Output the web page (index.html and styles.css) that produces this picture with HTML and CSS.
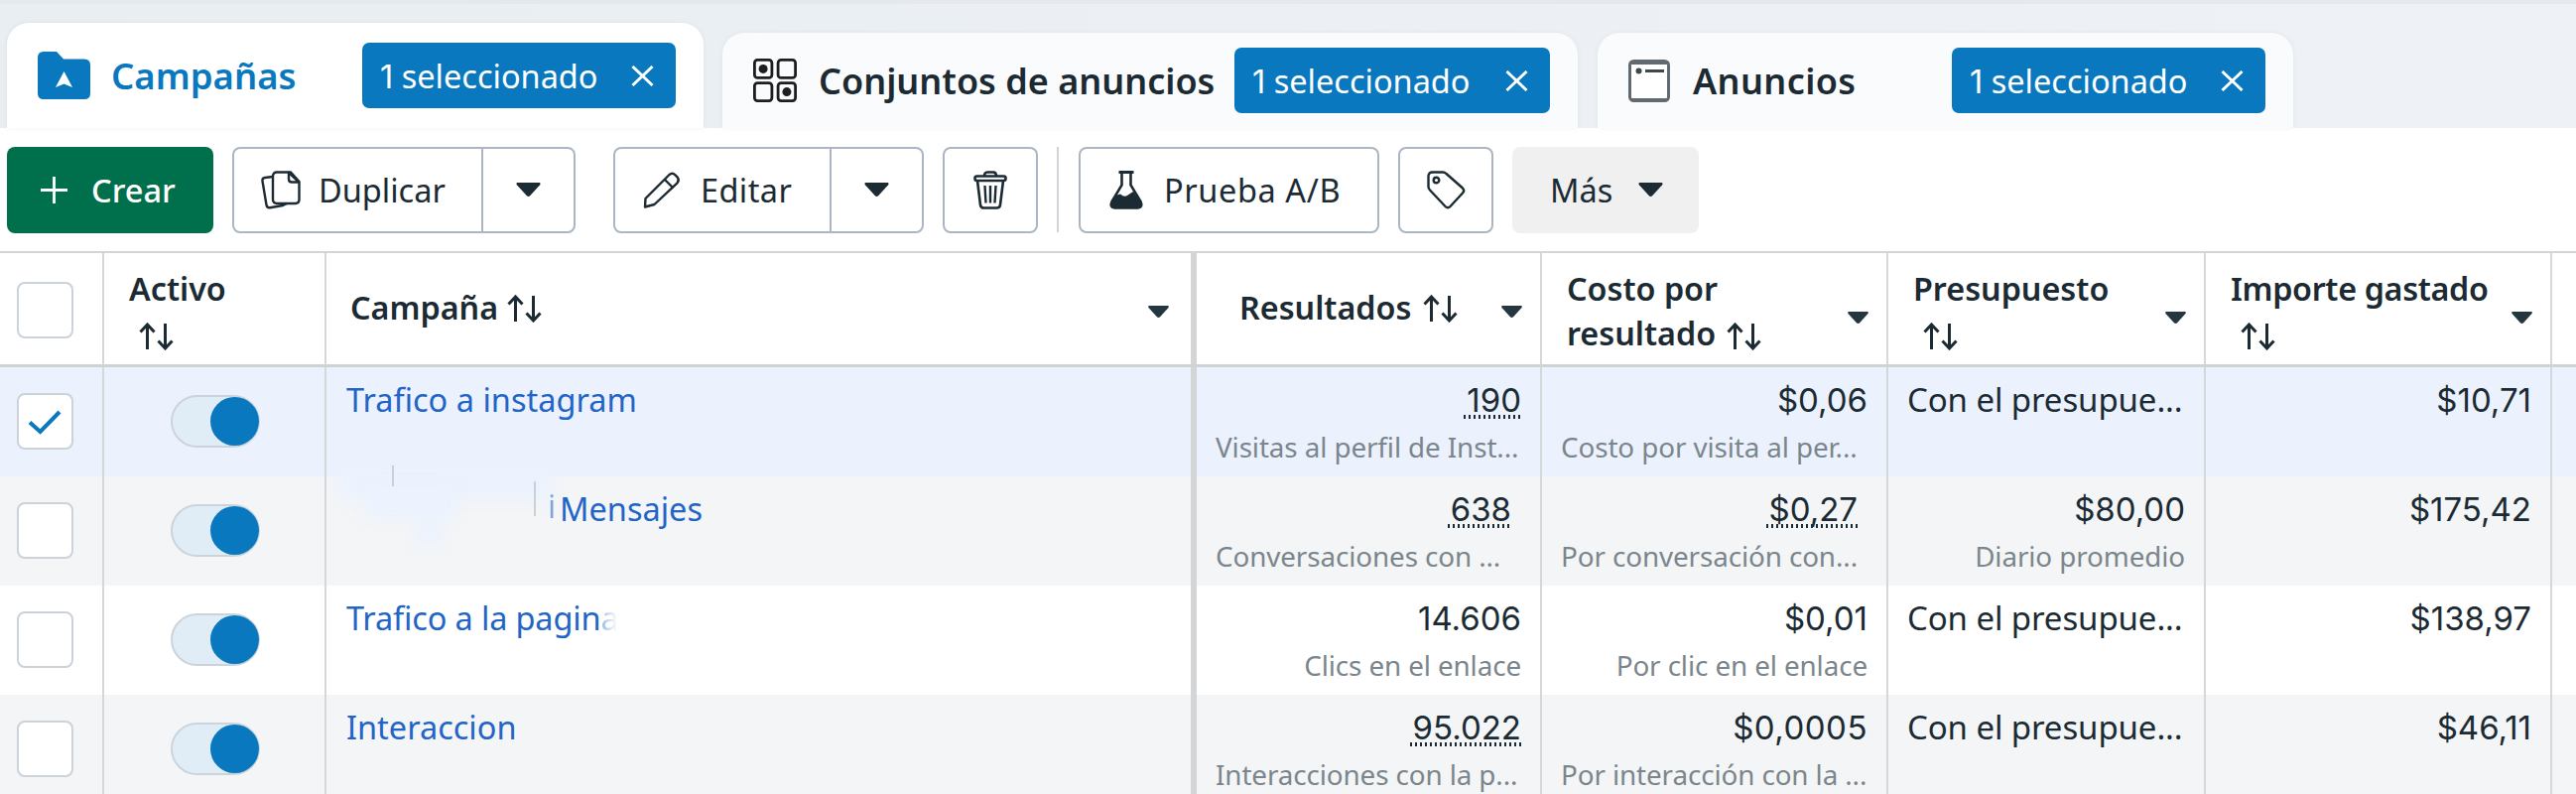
FILE: index.html
```html
<!DOCTYPE html>
<html lang="es">
<head>
<meta charset="utf-8">
<title>Campañas</title>
<link rel="stylesheet" href="styles.css">
</head>
<body>
<svg class="defs" width="0" height="0">
  <symbol id="sort" viewBox="0 0 35 28"><path d="M8.500 27V2M1.500 9.500L8.500 2l7 7.500M26.500 1v25M19.500 18.500l7 7.500 7-7.500" fill="none" stroke="currentColor" stroke-width="3"/></symbol>
  <symbol id="caret" viewBox="0 0 26 15"><path d="M1.500 0h23c1.500 0 1.700 1.500 1 2.500L15 14c-1.300 1.300-2.700 1.300-4 0L.5 2.500C-.2 1.500 0 0 1.500 0z" fill="currentColor"/></symbol>
  <symbol id="close" viewBox="0 0 24 22"><path d="M1.500 1l21 20M22.500 1l-21 20" fill="none" stroke="currentColor" stroke-width="3"/></symbol>
</svg>

<nav class="tabs">
  <div class="tab tab-active">
    <svg class="ic-folder" viewBox="0 0 53 48"><path d="M6 0h13l7 7.500h21q6 0 6 6V42q0 6-6 6H6q-6 0-6-6V6q0-6 6-6z" fill="#0a78be"/><path d="M26.500 20L35 36l-8.500-3.500L18 36z" fill="#fff"/></svg>
    <span class="tab-name">Campañas</span>
    <span class="pill"><span><span class="num">1</span> seleccionado</span><svg class="ic-close"><use href="#close"/></svg></span>
  </div>
  <div class="tab tab-sets">
    <svg class="ic-grid" viewBox="0 0 44 44" fill="none" stroke="#1c1e21" stroke-width="2.800"><rect x="1.400" y="1.400" width="17.500" height="18" rx="3"/><rect x="25.100" y="1.400" width="17.500" height="18" rx="3"/><rect x="1.400" y="24.600" width="17.500" height="18" rx="3"/><rect x="25.100" y="24.600" width="17.500" height="18" rx="3"/><circle cx="10.100" cy="10.400" r="4.500" fill="#1c1e21" stroke="none"/><circle cx="33.900" cy="33.600" r="4.500" fill="#1c1e21" stroke="none"/></svg>
    <span class="tab-name">Conjuntos de anuncios</span>
    <span class="pill"><span><span class="num">1</span> seleccionado</span><svg class="ic-close"><use href="#close"/></svg></span>
  </div>
  <div class="tab tab-ads">
    <svg class="ic-ad" viewBox="0 0 42 43"><rect x="1.500" y="1.500" width="39" height="40" rx="4" fill="#fff" stroke="#606a70" stroke-width="3"/><path d="M2 4h38M2 40h38" stroke="#606a70" stroke-width="2"/><circle cx="10.500" cy="11.500" r="3" fill="#3d474c"/><path d="M17 11.500h19" stroke="#3d474c" stroke-width="3"/></svg>
    <span class="tab-name">Anuncios</span>
    <span class="pill"><span><span class="num">1</span> seleccionado</span><svg class="ic-close"><use href="#close"/></svg></span>
  </div>
</nav>

<div class="toolbar">
  <button class="btn create"><svg class="ic-plus" viewBox="0 0 27 27"><path d="M13.500 0v27M0 13.500h27" stroke="#fff" stroke-width="2.800"/></svg>Crear</button>
  <div class="btn split dup">
    <span class="main"><svg class="ic-copy" viewBox="0 0 40 39" fill="none" stroke="#1c2b33" stroke-width="2.400" stroke-linejoin="round"><path d="M12 6L4 7q-3 .5-2.500 3.500l4 24q.6 3.200 3.500 2.700L22 35l4-2"/><path d="M16 1.500h14l8.500 9.500v18q0 4-4 4H16q-4 0-4-4V5.500q0-4 4-4z" fill="#fff"/><path d="M28 2v6.500q0 3 3 3h7z" fill="#fff"/></svg>Duplicar</span>
    <span class="drop"><svg class="ic-caret"><use href="#caret"/></svg></span>
  </div>
  <div class="btn split edit">
    <span class="main"><svg class="ic-pencil" viewBox="0 0 38 37" fill="none" stroke="#1c2b33" stroke-width="2.400" stroke-linejoin="round"><path d="M2 35.500l.5-8.500L26.500 3q3-2.500 6 .3l2 2q2.500 3 0 6L11.500 33z"/><path d="M22 8l8.500 8.500"/></svg>Editar</span>
    <span class="drop"><svg class="ic-caret"><use href="#caret"/></svg></span>
  </div>
  <div class="btn square trash"><svg class="ic-trash" viewBox="0 0 34 39" fill="none" stroke="#1c2b33" stroke-width="2.600" stroke-linejoin="round"><path d="M11 5.500Q11 1.500 14 1.500h6q3 0 3 4"/><rect x="1.500" y="5.500" width="31" height="4.500" rx="2"/><path d="M4 10l3 24.500q.4 3 3.500 3h13q3.100 0 3.500-3L30 10"/><path d="M11.500 15l1 17.500M17 15v17.500M22.500 15l-1 17.500" stroke-width="2.400"/></svg></div>
  <span class="sep"></span>
  <div class="btn ab"><svg class="ic-flask" viewBox="0 0 34 39"><path d="M12.500 2v12.500L2.500 31q-2.500 6 3 6.500h23q5.500-.5 3-6.500l-10-16.500V2" fill="none" stroke="#1c2b33" stroke-width="2.600"/><path d="M9.500 1.500h15" stroke="#1c2b33" stroke-width="3"/><path d="M6 25l5-1.500q4 3.500 7 1.500l6-4 8 11q2 5-3 5.500H5q-5-.5-3-5.500z" fill="#1c2b33"/></svg>Prueba A/B</div>
  <div class="btn square"><svg class="ic-tag" viewBox="0 0 39 39" fill="none" stroke="#1c2b33" stroke-width="2.400" stroke-linejoin="round"><path d="M1.500 5.500q0-4 4-4H16q2 0 3.500 1.500L36 17.500q2.500 2.500 0 5L23.500 36q-2.500 2.500-5 0L3 19.500Q1.500 18 1.500 16z"/><circle cx="9.500" cy="9.500" r="2.800"/></svg></div>
  <div class="btn more">Más<svg class="ic-caret"><use href="#caret"/></svg></div>
</div>

<div class="table">
  <div class="row head">
    <div class="c"><span class="check"></span></div>
    <div class="c two"><span class="label">Activo<br><svg class="ic-sort ind"><use href="#sort"/></svg></span></div>
    <div class="c one name"><span class="label">Campaña <svg class="ic-sort"><use href="#sort"/></svg></span><svg class="arr"><use href="#caret"/></svg></div>
    <div class="c one res"><span class="label">Resultados <svg class="ic-sort far"><use href="#sort"/></svg></span><svg class="arr"><use href="#caret"/></svg></div>
    <div class="c two"><span class="label">Costo por<br>resultado <svg class="ic-sort far"><use href="#sort"/></svg></span><svg class="arr"><use href="#caret"/></svg></div>
    <div class="c two"><span class="label">Presupuesto<br><svg class="ic-sort ind"><use href="#sort"/></svg></span><svg class="arr"><use href="#caret"/></svg></div>
    <div class="c two amount"><span class="label">Importe gastado<br><svg class="ic-sort ind"><use href="#sort"/></svg></span><svg class="arr"><use href="#caret"/></svg></div>
    <div class="c"></div>
  </div>

  <div class="row selected">
    <div class="c"><span class="check"><svg class="ic-check" viewBox="0 0 34 25"><path d="M2 12.500l10.500 9.500L32 2" fill="none" stroke="#0a78be" stroke-width="4"/></svg></span></div>
    <div class="c"><span class="toggle"></span></div>
    <div class="c link">Trafico a instagram</div>
    <div class="c val"><p><span class="num dot">190</span></p><p class="sub left">Visitas al perfil de Inst...</p></div>
    <div class="c val"><p><span class="num">$0,06</span></p><p class="sub left">Costo por visita al per...</p></div>
    <div class="c val left"><p>Con el presupue...</p></div>
    <div class="c val"><p><span class="num">$10,71</span></p></div>
    <div class="c"></div>
  </div>

  <div class="row alt">
    <div class="c"><span class="check"></span></div>
    <div class="c"><span class="toggle"></span></div>
    <div class="c link smudged"><i class="smear s1"></i><i class="smear s2"></i><i class="smear s3"></i><i class="tick t1"></i><i class="tick t2"></i><span class="ghost">j</span><span>Mensajes</span></div>
    <div class="c val"><p class="in"><span class="num dot">638</span></p><p class="sub left">Conversaciones con ...</p></div>
    <div class="c val"><p class="in"><span class="num dot">$0,27</span></p><p class="sub left">Por conversación con...</p></div>
    <div class="c val"><p><span class="num">$80,00</span></p><p class="sub">Diario promedio</p></div>
    <div class="c val"><p><span class="num">$175,42</span></p></div>
    <div class="c"></div>
  </div>

  <div class="row">
    <div class="c"><span class="check"></span></div>
    <div class="c"><span class="toggle"></span></div>
    <div class="c link page">Trafico a la pagin<span class="fade">a</span></div>
    <div class="c val"><p><span class="num">14.606</span></p><p class="sub">Clics en el enlace</p></div>
    <div class="c val"><p><span class="num">$0,01</span></p><p class="sub">Por clic en el enlace</p></div>
    <div class="c val left"><p>Con el presupue...</p></div>
    <div class="c val"><p><span class="num">$138,97</span></p></div>
    <div class="c"></div>
  </div>

  <div class="row alt">
    <div class="c"><span class="check"></span></div>
    <div class="c"><span class="toggle"></span></div>
    <div class="c link">Interaccion</div>
    <div class="c val"><p><span class="num dot">95.022</span></p><p class="sub left">Interacciones con la p...</p></div>
    <div class="c val"><p><span class="num wide">$0,0005</span></p><p class="sub left">Por interacción con la ...</p></div>
    <div class="c val left"><p>Con el presupue...</p></div>
    <div class="c val"><p><span class="num">$46,11</span></p></div>
    <div class="c"></div>
  </div>
</div>
</body>
</html>
```
FILE: styles.css
```css
* { box-sizing: border-box; }
html, body { height: 100%; }
body {
  margin: 0;
  overflow: hidden;
  background: #fff;
  color: #1c2b33;
  font-family: "Noto Sans", sans-serif;
  font-size: 32.5px;
  white-space: nowrap;
}
p { margin: 0; }
svg { display: block; flex: none; overflow: visible; }
.defs { position: absolute; }
.num { font-family: Inter, sans-serif; }

/* Tabs */
.tabs {
  display: flex;
  align-items: flex-end;
  height: 129px;
  padding-left: 7px;
  border-top: 4px solid #e5e8ec;
  background: linear-gradient(90deg, #e8eef2, #ecf0f4 50%, #eef1f5);
}
.tab {
  display: flex;
  align-items: center;
  height: 96px;
  background: #fafbfd;
  border-radius: 22px 22px 0 0;
  box-shadow: 0 0 5px rgba(60, 80, 100, .07);
}
.tab-active { width: 702px; height: 106px; padding: 0 28px 0 31px; background: #fff; color: #0a78be; }
.tab-sets { width: 862px; margin-left: 19px; padding: 0 28px 0 31px; }
.tab-ads { width: 701px; margin-left: 20px; padding: 0 28px 0 31px; }
.tab-name { font-size: 36px; font-weight: 600; }
.tab-active .tab-name { font-size: 36.500px; }
.tab-ads .tab-name { letter-spacing: .4px; }
.ic-folder { width: 53px; height: 48px; margin-right: 21px; }
.ic-grid { width: 44px; height: 44px; margin-right: 22px; }
.ic-ad { width: 42px; height: 43px; margin-right: 23px; }
.pill {
  display: flex;
  align-items: center;
  justify-content: space-between;
  width: 316px;
  height: 66px;
  margin-left: auto;
  padding: 0 22px 0 18px;
  border-radius: 7px;
  background: #0a78be;
  color: #fff;
  font-size: 32.500px;
}
.tab-sets .pill { width: 318px; }
.ic-close { width: 23px; height: 21px; }

/* Toolbar */
.toolbar { display: flex; align-items: center; height: 124px; padding-left: 7px; }
.btn {
  display: flex;
  align-items: center;
  height: 87px;
  border: 2px solid #abb6c4;
  border-radius: 8px;
  background: #fff;
  color: #1c2b33;
  font: 400 32.500px "Noto Sans", sans-serif;
}
.create { width: 208px; padding: 0 0 0 34px; border: 0; background: #00704c; color: #fff; font-weight: 500; }
.ic-plus { width: 27px; height: 27px; margin-right: 24px; }
.split .main { display: flex; align-items: center; height: 100%; border-right: 2px solid #abb6c4; }
.split .drop { display: flex; flex: 1; justify-content: center; }
.ic-caret { width: 25px; height: 14px; }
.dup { width: 346px; margin-left: 19px; }
.dup .main { width: 251px; padding-left: 27px; }
.ic-copy { width: 40px; height: 39px; margin-right: 18px; }
.edit { width: 313px; margin-left: 38px; }
.edit .main { width: 218px; padding-left: 28px; letter-spacing: .4px; }
.ic-pencil { width: 38px; height: 37px; margin-right: 20px; }
.square { width: 96px; justify-content: center; }
.trash { margin-left: 19px; }
.ic-trash { width: 34px; height: 39px; }
.sep { width: 2px; height: 86px; margin: 0 20px 0 19px; background: #cfd4da; }
.ab { width: 303px; padding-left: 29px; margin-right: 19px; letter-spacing: .6px; }
.ic-flask { width: 34px; height: 39px; margin-right: 21px; }
.ic-tag { width: 39px; height: 39px; }
.more { width: 188px; margin-left: 19px; padding-left: 36px; border-color: #f0f0f0; background: #f0f0f0; }
.more .ic-caret { margin-left: 26px; }

/* Table */
.row {
  display: grid;
  grid-template-columns: 105px 224px 877px 348px 349px 320px 349px 24px;
  height: 110px;
}
.selected { background: #ebf2fe; }
.alt { background: #f3f5f7; }
.c { position: relative; min-width: 0; border-right: 2px solid #d5d8db; }
.c:nth-child(3) { border-right: 6px solid #d3d5d7; }
.c:last-child { border-right: 0; }

.head {
  height: 117px;
  border-top: 2px solid #d3d6d8;
  border-bottom: 3px solid #d0d3d5;
  font-size: 32.300px;
  font-weight: 600;
  line-height: 45px;
}
.head .c { display: flex; align-items: center; padding: 0 18px 0 25px; }
.head .two { padding-top: 4px; }
.head .one { padding-bottom: 3px; }
.head .name { padding-right: 22px; padding-left: 24px; }
.head .res { padding-left: 43px; }
.head .amount { letter-spacing: -.35px; }
.ic-sort { display: inline-block; width: 35px; height: 28px; vertical-align: -3px; }
.far { margin-left: 3px; }
.ind { margin-left: 10px; vertical-align: -5px; }
.two .far { vertical-align: -5px; }
.arr { width: 21px; height: 12px; margin-left: auto; color: #24363f; }
.two .arr { margin-top: 14px; }
.one .arr { margin-top: 8px; }

.check {
  display: block;
  width: 57px;
  height: 57px;
  margin: 26px 0 0 17px;
  padding: 15px 0 0 9px;
  border: 2px solid #cbd2d9;
  border-radius: 8px;
  background: #fff;
}
.head .check { margin: 3px 0 0 -8px; }
.ic-check { width: 34px; height: 25px; }
.toggle {
  display: flex;
  justify-content: flex-end;
  width: 90px;
  height: 53px;
  margin: 28px 0 0 67px;
  border: 2px solid #cbd4db;
  border-right-width: 1px;
  border-radius: 27px;
  background: #e0edf6;
}
.toggle::before { content: ""; width: 49px; height: 49px; border-radius: 50%; background: #0a78be; }

.link { padding: 11px 0 0 20px; color: #2265c6; font-size: 32.500px; line-height: 44px; }
.page { letter-spacing: -.15px; }
.val { padding: 11px 19px 0; text-align: right; line-height: 44px; font-size: 33px; }
.val.left, .sub.left { text-align: left; }
.val.left { letter-spacing: -.1px; }
.in { padding-right: 10px; }
.wide { letter-spacing: .5px; }
.sub { margin-top: 5px; color: #7b868c; font-size: 27.800px; line-height: 40px; letter-spacing: -.1px; }
.dot {
  display: inline-block;
  height: 38px;
  line-height: 38px;
  padding-left: 3px;
  background: repeating-linear-gradient(90deg, #1c2b33 0 2px, transparent 2px 5px) 0 100% / 100% 4px no-repeat;
}

/* Partly erased campaign names */
.smudged span { position: relative; }
.smudged { padding-left: 220px; }
.ghost { display: inline-block; width: 14px; opacity: .55; font-size: 30px; clip-path: inset(0 0 10px 0); text-align: center; top: -4px; }
.smear { position: absolute; background: #ebf2fe; filter: blur(7px); }
.s1 { left: 12px; top: -10px; width: 215px; height: 32px; }
.s2 { left: 40px; top: 10px; width: 90px; height: 32px; }
.s3 { left: 88px; top: 40px; width: 30px; height: 28px; opacity: .8; }
.tick { position: absolute; width: 2px; background: #c9d0d9; }
.t1 { left: 66px; top: -11px; height: 21px; }
.t2 { left: 209px; top: 5px; height: 35px; }
.smudged span:last-of-type { margin-left: 1px; }
.fade { opacity: .6; -webkit-mask-image: linear-gradient(90deg, rgba(0,0,0,.8), transparent 90%); mask-image: linear-gradient(90deg, rgba(0,0,0,.8), transparent 90%); }
```
